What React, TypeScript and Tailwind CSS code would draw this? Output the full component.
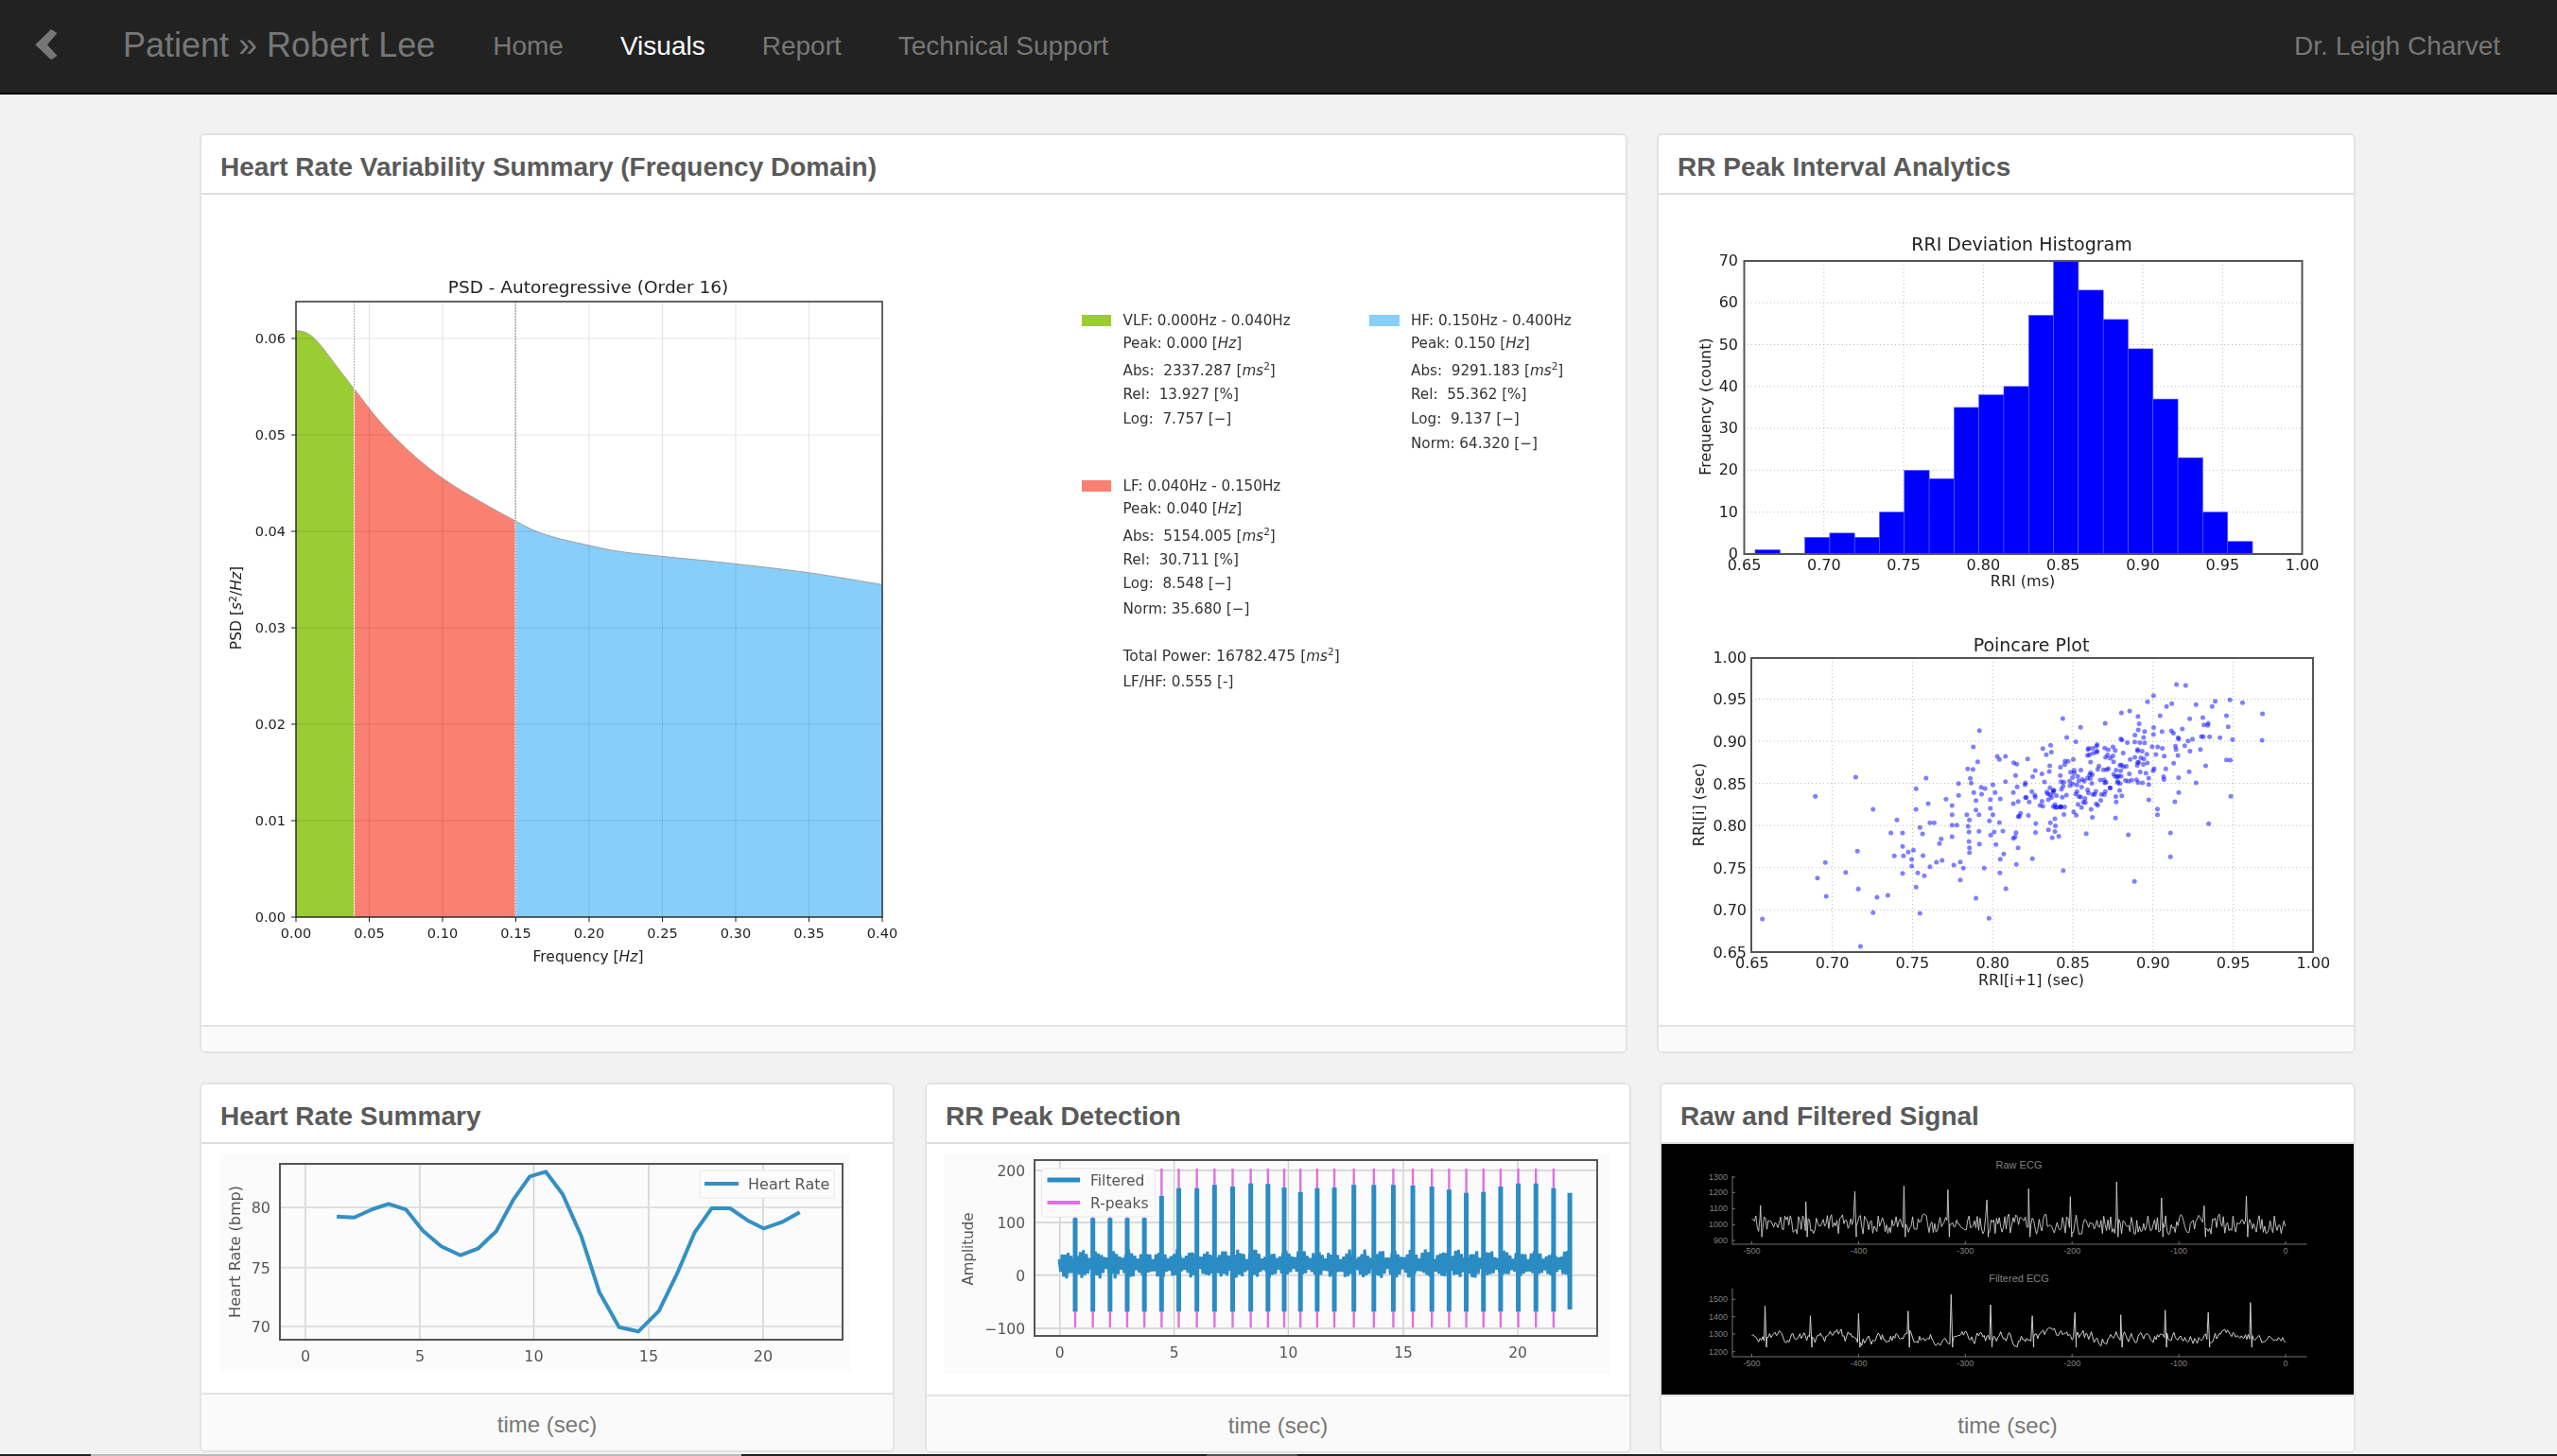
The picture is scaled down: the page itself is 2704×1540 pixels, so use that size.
import React from "react";

// small seeded generator so the noisy traces stay the same on every render
const makeRng = (seed: number) => () => {
    seed = (seed * 1664525 + 1013904223) % 4294967296;
    return seed / 4294967296;
};

const toPoints = (pts: number[][]) => pts.map(([x, y]) => `${x.toFixed(1)},${y.toFixed(1)}`).join(" ");

// catmull-rom resample, the PSD curve has no visible corners
const smoothLine = (pts: number[][]) => {
    const out: number[][] = [];
    for (let i = 0; i < pts.length - 1; i++) {
        const p0 = pts[Math.max(i - 1, 0)];
        const p1 = pts[i];
        const p2 = pts[i + 1];
        const p3 = pts[Math.min(i + 2, pts.length - 1)];
        for (let t = 0; t < 1; t += 0.125) {
            const at = (k: number) =>
                0.5 *
                (2 * p1[k] +
                    (p2[k] - p0[k]) * t +
                    (2 * p0[k] - 5 * p1[k] + 4 * p2[k] - p3[k]) * t * t +
                    (3 * p1[k] - p0[k] - 3 * p2[k] + p3[k]) * t * t * t);
            out.push([at(0), at(1)]);
        }
    }
    out.push(pts[pts.length - 1]);
    return out;
};

const Panel = ({
    title,
    className,
    bodyClass,
    footer,
    children,
}: {
    title: string;
    className: string;
    bodyClass: string;
    footer?: string;
    children: React.ReactNode;
}) => (
    <section className={`flex flex-col border-2 border-[#e3e3e3] rounded-[6px] bg-white overflow-hidden ${className}`}>
        <div className="h-[63px] shrink-0 flex items-center pt-[6px] pl-[20px] border-b-2 border-[#dddddd] text-[28px] font-bold text-[#5a5a5a]">
            {title}
        </div>
        <div className={`shrink-0 ${bodyClass}`}>{children}</div>
        <div className="flex-1 flex items-center justify-center pt-[4px] bg-[#fafafa] border-t-2 border-[#e3e3e3] text-[24px] text-[#777777]">
            {footer}
        </div>
    </section>
);

/* ---------- PSD chart + legend ---------- */

const psdCurve = smoothLine(
    [
        [192, 160], [215, 165], [240, 185], [280, 235], [318, 283], [400, 380], [513, 475],
        [671, 565], [740, 595], [832, 617], [900, 630], [991, 640], [1151, 656], [1311, 675], [1470, 700],
    ].map(([x, y]) => [220 + x / 2.063, 270 + y / 2.01]),
);

const psdX = (f: number) => 313 + f * 1550;
const psdY = (v: number) => 970 - v * 10200;

const curveYAt = (x: number) => {
    const i = psdCurve.findIndex(([px]) => px >= x);
    if (i <= 0) return psdCurve[0][1];
    const [x0, y0] = psdCurve[i - 1];
    const [x1, y1] = psdCurve[i];
    return y0 + ((y1 - y0) * (x - x0)) / (x1 - x0);
};

const fillBetween = (from: number, to: number) => {
    const inside = psdCurve.filter(([x]) => x > from && x < to);
    return toPoints([[from, 970], [from, curveYAt(from)], ...inside, [to, curveYAt(to)], [to, 970]]);
};

const LegendRows = ({ x, rows }: { x: number; rows: [number, React.ReactNode][] }) => (
    <>
        {rows.map(([y, row], i) => (
            <text key={i} x={x} y={y + 5}>
                {row}
            </text>
        ))}
    </>
);

const Sq = () => (
    <>
        <tspan fontStyle="italic">ms</tspan>
        <tspan dy={-6} fontSize={10.5}>
            2
        </tspan>
        <tspan dy={6}>]</tspan>
    </>
);

const Hz = () => (
    <>
        [<tspan fontStyle="italic">Hz</tspan>]
    </>
);

const PsdFigure = () => (
    <svg viewBox="213 206 1506 878" width={1506} height={878} className="block font-['DejaVu_Sans',sans-serif] blur-[0.3px]">
        <polygon points={fillBetween(313, 374.6)} fill="#9acd32" />
        <polygon points={fillBetween(374.6, 545)} fill="#fa8072" />
        <polygon points={fillBetween(545, 933)} fill="#87cefa" />
        <polyline points={toPoints(psdCurve)} fill="none" stroke="#a0a0a0" strokeWidth={1} />
        {[0.05, 0.1, 0.15, 0.2, 0.25, 0.3, 0.35].map((f) => (
            <line key={f} x1={psdX(f)} x2={psdX(f)} y1={319} y2={970} stroke="#000000" strokeOpacity={0.1} />
        ))}
        {[0.01, 0.02, 0.03, 0.04, 0.05, 0.06].map((v) => (
            <line key={v} x1={313} x2={933} y1={psdY(v)} y2={psdY(v)} stroke="#000000" strokeOpacity={0.1} />
        ))}
        <line x1={374.6} x2={374.6} y1={319} y2={410} stroke="#aaaaaa" strokeDasharray="2 1" />
        <line x1={374.6} x2={374.6} y1={410} y2={970} stroke="#ffffff" strokeDasharray="2 1" />
        <line x1={545} x2={545} y1={319} y2={551} stroke="#888888" strokeDasharray="2 1" />
        <line x1={545} x2={545} y1={551} y2={970} stroke="#ffffff" strokeDasharray="2 1" />
        <rect x={313} y={319} width={620} height={651} fill="none" stroke="#222222" strokeWidth={1.4} />

        <g fontSize={14.5} fill="#222222">
            <text x={622} y={309.5} textAnchor="middle" fontSize={18.5}>
                PSD - Autoregressive (Order 16)
            </text>
            {["0.00", "0.01", "0.02", "0.03", "0.04", "0.05", "0.06"].map((t, i) => (
                <g key={t}>
                    <line x1={308} x2={313} y1={psdY(i / 100)} y2={psdY(i / 100)} stroke="#222222" />
                    <text x={302} y={psdY(i / 100) + 5} textAnchor="end">
                        {t}
                    </text>
                </g>
            ))}
            {["0.00", "0.05", "0.10", "0.15", "0.20", "0.25", "0.30", "0.35", "0.40"].map((t, i) => (
                <g key={t}>
                    <line x1={psdX(i * 0.05)} x2={psdX(i * 0.05)} y1={970} y2={975} stroke="#222222" />
                    <text x={psdX(i * 0.05)} y={992} textAnchor="middle">
                        {t}
                    </text>
                </g>
            ))}
            <text x={622} y={1017} textAnchor="middle" fontSize={15.5}>
                Frequency [<tspan fontStyle="italic">Hz</tspan>]
            </text>
            <text transform="translate(255 643) rotate(-90)" textAnchor="middle" fontSize={15.5}>
                PSD [<tspan fontStyle="italic">s</tspan>
                <tspan dy={-5} fontSize={11}>
                    2
                </tspan>
                <tspan dy={5}>/</tspan>
                <tspan fontStyle="italic">Hz</tspan>]
            </text>
        </g>

        <rect x={1144} y={333} width={31} height={12} fill="#9acd32" />
        <rect x={1448} y={333} width={32} height={12} fill="#87cefa" />
        <rect x={1144} y={508} width={31} height={12} fill="#fa8072" />
        <g fontSize={15.2} fill="#333333">
            <LegendRows
                x={1187.5}
                rows={[
                    [339, "VLF: 0.000Hz - 0.040Hz"],
                    [363, <>Peak: 0.000 <Hz /></>],
                    [392, <>Abs:{"\u00A0 "}2337.287 [<Sq /></>],
                    [417, "Rel:\u00A0 13.927 [%]"],
                    [443, "Log:\u00A0 7.757 [−]"],
                    [514, "LF: 0.040Hz - 0.150Hz"],
                    [538, <>Peak: 0.040 <Hz /></>],
                    [567, <>Abs:{"\u00A0 "}5154.005 [<Sq /></>],
                    [592, "Rel:\u00A0 30.711 [%]"],
                    [617, "Log:\u00A0 8.548 [−]"],
                    [644, "Norm: 35.680 [−]"],
                    [694, <><tspan fontSize={15.6}>Total Power: 16782.475 [</tspan><Sq /></>],
                    [721, "LF/HF: 0.555 [-]"],
                ]}
            />
            <LegendRows
                x={1492}
                rows={[
                    [339, "HF: 0.150Hz - 0.400Hz"],
                    [363, <>Peak: 0.150 <Hz /></>],
                    [392, <>Abs:{"\u00A0 "}9291.183 [<Sq /></>],
                    [417, "Rel:\u00A0 55.362 [%]"],
                    [443, "Log:\u00A0 9.137 [−]"],
                    [469, "Norm: 64.320 [−]"],
                ]}
            />
        </g>
    </svg>
);

/* ---------- RR analytics: histogram + poincare ---------- */

const histCounts = [1, 0, 4, 5, 4, 10, 20, 18, 35, 38, 40, 57, 70, 63, 56, 49, 37, 23, 10, 3];

const extraDots = [
    [204, 966], [326, 577], [331, 836], [349, 787], [351, 894], [396, 818], [419, 516], [423, 751], [425, 871], [430, 1053],
    [459, 618], [459, 946], [468, 897], [493, 891], [500, 693], [508, 766], [514, 652], [527, 693], [527, 736], [527, 821],
    [529, 766], [540, 754], [548, 777], [548, 798], [552, 748], [558, 553], [558, 618], [558, 865], [562, 820], [567, 948],
    [567, 676], [573, 696], [574, 765], [577, 829], [581, 519], [586, 600], [590, 661], [590, 800], [600, 661], [605, 786],
    [612, 727], [616, 712], [618, 780], [627, 586], [641, 606], [641, 635], [641, 668], [641, 705], [645, 795], [652, 668],
    [656, 536], [656, 574], [660, 785], [660, 842], [667, 805], [675, 635], [677, 490], [678, 672], [680, 690], [680, 720],
    [681, 740], [681, 755], [681, 652], [683, 520], [685, 535], [689, 491], [690, 420], [691, 565], [696, 590], [696, 620],
    [696, 900], [700, 467], [703, 688], [703, 635], [704, 368], [704, 728], [708, 548], [709, 570], [715, 805], [717, 552],
    [726, 964], [729, 587], [729, 615], [727, 655], [730, 700], [735, 540], [740, 565], [735, 635], [738, 690], [745, 450],
    [750, 460], [742, 730], [750, 660], [752, 585], [751, 820], [752, 776], [760, 760], [764, 450], [764, 530], [765, 870],
    [758, 687], [783, 470], [782, 710], [790, 475], [793, 740], [789, 793], [815, 458], [826, 775], [850, 425], [858, 445],
    [868, 415], [896, 330], [897, 812], [905, 390], [937, 358], [950, 695], [1158, 222], [1179, 225], [1105, 257], [1091, 277],
    [1147, 283], [1135, 292], [1203, 286], [1247, 275], [1281, 271], [1310, 280], [1240, 292], [1273, 321], [1356, 315],
    [1355, 399], [1287, 397], [1283, 577], [1232, 664], [1144, 693], [1144, 769], [1061, 847], [1047, 699], [1114, 617],
    [1114, 635], [1154, 594], [1163, 565], [1203, 534], [1273, 461], [1225, 480], [1282, 462], [1277, 356], [1258, 391],
    [1234, 388], [1221, 350], [1213, 428], [1187, 499], [1050, 306], [1031, 312],
];

const buildDots = () => {
    const rng = makeRng(42);
    const gauss = () => Math.sqrt(-2 * Math.log(rng() + 1e-6)) * Math.cos(2 * Math.PI * rng());
    const dots = [...extraDots];
    for (let i = 0; i < 270; i++) {
        const x = 965 + 135 * gauss();
        const y = 520 - 0.6 * (x - 965) + 68 * gauss();
        if (x > 780 && x < 1240 && y > 300 && y < 730) dots.push([x, y]);
    }
    return dots.map(([x, y]) => [1770 + x / 2.178, 650 + y / 3]);
};
const poincareDots = buildDots();

const Histogram = () => {
    const x = (v: number) => 1844.5 + (v - 0.65) * 1686;
    const y = (c: number) => 586 - c * 4.43;
    return (
        <g fontSize={16} fill="#222222">
            {[0.7, 0.75, 0.8, 0.85, 0.9, 0.95].map((v) => (
                <line key={v} x1={x(v)} x2={x(v)} y1={276} y2={586} stroke="#bbbbbb" strokeDasharray="1 3" />
            ))}
            {[10, 20, 30, 40, 50, 60].map((c) => (
                <line key={c} x1={1844} x2={2435} y1={y(c)} y2={y(c)} stroke="#bbbbbb" strokeDasharray="1 3" />
            ))}
            {histCounts.map((c, i) =>
                c > 0 ? (
                    <rect key={i} x={1856 + i * 26.3} y={y(c)} width={26.3} height={c * 4.43} fill="#0000ff" stroke="#5a5aff" strokeWidth={0.6} />
                ) : null,
            )}
            <rect x={1844.5} y={276} width={590} height={310} fill="none" stroke="#555555" strokeWidth={2} />
            {["0.65", "0.70", "0.75", "0.80", "0.85", "0.90", "0.95", "1.00"].map((t, i) => (
                <text key={t} x={x(0.65 + i * 0.05)} y={603} textAnchor="middle">
                    {t}
                </text>
            ))}
            {[0, 10, 20, 30, 40, 50, 60, 70].map((c) => (
                <text key={c} x={1838} y={y(c) + 5} textAnchor="end">
                    {c}
                </text>
            ))}
            <text x={2138} y={265} textAnchor="middle" fontSize={19}>
                RRI Deviation Histogram
            </text>
            <text x={2139} y={620} textAnchor="middle">
                RRI (ms)
            </text>
            <text transform="translate(1809 430) rotate(-90)" textAnchor="middle">
                Frequency (count)
            </text>
        </g>
    );
};

const Poincare = () => {
    const x = (v: number) => 1852.8 + (v - 0.65) * 1696;
    const y = (v: number) => 1007 - (v - 0.65) * 892;
    const ticks = ["0.65", "0.70", "0.75", "0.80", "0.85", "0.90", "0.95", "1.00"];
    return (
        <g fontSize={16} fill="#222222">
            {ticks.slice(1, 7).map((t) => (
                <g key={t}>
                    <line x1={x(+t)} x2={x(+t)} y1={696} y2={1007} stroke="#bbbbbb" strokeDasharray="1 3" />
                    <line x1={1852} x2={2446} y1={y(+t)} y2={y(+t)} stroke="#bbbbbb" strokeDasharray="1 3" />
                </g>
            ))}
            {poincareDots.map(([cx, cy], i) => (
                <circle key={i} cx={cx} cy={cy} r={2.5} fill="#0000ff" fillOpacity={0.5} />
            ))}
            <rect x={1852} y={696} width={594} height={311} fill="none" stroke="#555555" strokeWidth={2} />
            {ticks.map((t) => (
                <g key={t}>
                    <text x={x(+t)} y={1024} textAnchor="middle">
                        {t}
                    </text>
                    <text x={1847} y={y(+t) + 6} textAnchor="end">
                        {t}
                    </text>
                </g>
            ))}
            <text x={2148} y={689} textAnchor="middle" fontSize={19}>
                Poincare Plot
            </text>
            <text x={2148} y={1042} textAnchor="middle">
                RRI[i+1] (sec)
            </text>
            <text transform="translate(1802 851) rotate(-90)" textAnchor="middle">
                RRI[i] (sec)
            </text>
        </g>
    );
};

const RriFigure = () => (
    <svg viewBox="1754 206 735 878" width={735} height={878} className="block font-['DejaVu_Sans',sans-serif] blur-[0.4px]">
        <Histogram />
        <Poincare />
    </svg>
);

/* ---------- bottom row ---------- */

const heartLine = [
    [322, 470], [360, 473], [400, 447], [435, 430], [473, 448], [510, 515], [550, 565], [592, 593], [630, 572], [670, 517],
    [708, 415], [743, 343], [778, 328], [815, 400], [855, 530], [895, 710], [938, 821], [980, 835], [1025, 770], [1065, 650],
    [1103, 520], [1140, 444], [1180, 444], [1218, 482], [1253, 508], [1293, 488], [1332, 457],
].map(([x, y]) => [200 + x / 2.063, 1130 + y / 3]);

const HeartFigure = () => (
    <svg
        viewBox="233 1220 667 230"
        width={667}
        height={230}
        className="block ml-[20px] mt-[10px] bg-[#fbfbfb] font-['DejaVu_Sans',sans-serif] blur-[0.6px]"
    >
        {[323, 444, 564.5, 686, 807].map((x) => (
            <line key={x} x1={x} x2={x} y1={1231} y2={1417} stroke="#cfcfcf" strokeWidth={1.4} />
        ))}
        {[1277, 1340.7, 1403].map((y) => (
            <line key={y} x1={296} x2={891} y1={y} y2={y} stroke="#e0e0e0" strokeWidth={2} />
        ))}
        <polyline points={toPoints(heartLine)} fill="none" stroke="#348fc4" strokeWidth={4} strokeLinejoin="round" />
        <rect x={296} y={1231} width={595} height={186} fill="none" stroke="#555555" strokeWidth={2} />
        <g fontSize={16} fill="#555555">
            {[
                [323, "0"],
                [444, "5"],
                [564.5, "10"],
                [686, "15"],
                [807, "20"],
            ].map(([x, t]) => (
                <text key={t} x={x} y={1440} textAnchor="middle">
                    {t}
                </text>
            ))}
            {[
                [1277, "80"],
                [1340.7, "75"],
                [1403, "70"],
            ].map(([y, t]) => (
                <text key={t} x={286} y={+y + 6} textAnchor="end">
                    {t}
                </text>
            ))}
            <text transform="translate(254 1324) rotate(-90)" textAnchor="middle">
                Heart Rate (bmp)
            </text>
            <text x={592} y={1462} textAnchor="middle">
                Time (s)
            </text>
            <rect x={740} y={1238} width={142} height={29} rx={3} fill="#fcfcfc" stroke="#e8e8e8" />
            <line x1={745} x2={781} y1={1252} y2={1252} stroke="#348fc4" strokeWidth={4} />
            <text x={791} y={1258}>
                Heart Rate
            </text>
        </g>
    </svg>
);

const peakTops = [
    475, 475, 475, 475, 475, 405, 380, 380, 370, 375, 365, 367, 378, 393, 380, 378, 370, 370, 370, 372, 375, 385, 395, 392, 375, 365, 365, 380,
];
const peakXs = [
    340, 378, 415, 452, 489, 526, 563, 602, 640, 679, 718, 755, 790, 825, 861, 898, 940, 983, 1025, 1067, 1108, 1145, 1182, 1219, 1256, 1294, 1332, 1370,
];
const rrX = (z: number) => 970 + z / 2.036;
const rrY = (z: number) => 1130 + z / 3;

const buildBand = () => {
    const rng = makeRng(7);
    const pts: number[][] = [];
    for (let x = 1120; x < 1662; x += 1.6) {
        const beat = Math.abs(Math.sin((x - 1120) * 0.19));
        pts.push([x, 1337 + (pts.length % 2 ? 1 : -1) * (5 + (5 + rng() * 6) * beat)]);
    }
    return pts;
};
const rrBand = buildBand();

const PeakFigure = () => (
    <svg
        viewBox="998 1220 704 233"
        width={704}
        height={233}
        className="block ml-[18px] mt-[10px] bg-[#fbfbfb] font-['DejaVu_Sans',sans-serif] blur-[0.6px]"
    >
        {[1120.8, 1241.6, 1362.4, 1484, 1605].map((x) => (
            <line key={x} x1={x} x2={x} y1={1227} y2={1413} stroke="#cfcfcf" strokeWidth={1.4} />
        ))}
        {[1238, 1293, 1348.7, 1405].map((y) => (
            <line key={y} x1={1094} x2={1689} y1={y} y2={y} stroke="#d9d9d9" strokeWidth={2} />
        ))}
        {peakXs.map((z) => (
            <line key={z} x1={rrX(z)} x2={rrX(z)} y1={1236} y2={1404} stroke="#e070e0" strokeWidth={2.4} />
        ))}
        <rect x={1101.5} y={1236} width={120} height={51} rx={3} fill="#fbfbfb" stroke="#e8e8e8" />
        <polyline points={toPoints(rrBand)} fill="none" stroke="#2b8cc4" strokeWidth={3} />
        {peakXs.map((z, i) => (
            <line key={z} x1={rrX(z)} x2={rrX(z)} y1={rrY(peakTops[i])} y2={rrY(772)} stroke="#2b8cc4" strokeWidth={5} />
        ))}
        <line x1={rrX(1405)} x2={rrX(1405)} y1={rrY(395)} y2={rrY(765)} stroke="#2b8cc4" strokeWidth={5} />
        <rect x={1094} y={1227} width={595} height={186} fill="none" stroke="#555555" strokeWidth={2} />
        <g fontSize={15.5} fill="#555555">
            {[
                [1120.8, "0"],
                [1241.6, "5"],
                [1362.4, "10"],
                [1484, "15"],
                [1605, "20"],
            ].map(([x, t]) => (
                <text key={t} x={x} y={1436} textAnchor="middle">
                    {t}
                </text>
            ))}
            {[
                [1238, "200"],
                [1293, "100"],
                [1348.7, "0"],
                [1405, "−100"],
            ].map(([y, t]) => (
                <text key={t} x={1084} y={+y + 6} textAnchor="end">
                    {t}
                </text>
            ))}
            <text transform="translate(1029 1321) rotate(-90)" textAnchor="middle" fontSize={15}>
                Amplitude
            </text>
            <line x1={1107.5} x2={1142} y1={1248} y2={1248} stroke="#2b8cc4" strokeWidth={5} />
            <text x={1153} y={1254}>
                Filtered
            </text>
            <line x1={1107.5} x2={1142} y1={1272} y2={1272} stroke="#e070e0" strokeWidth={4} />
            <text x={1153} y={1278}>
                R-peaks
            </text>
        </g>
    </svg>
);

const ecgX = (z: number) => 1740 + z / 2.063;
const ecgY = (z: number) => 1130 + z / 3;

const ecgTrace = (seed: number, base: number, amp: number, smooth: number, dip: number, peaks: number[][]) => {
    const rng = makeRng(seed);
    const out: number[][] = [];
    let prev = base;
    let next = 0;
    for (let x = 232; x <= 1397; x += 3) {
        if (next < peaks.length && x >= peaks[next][0]) {
            out.push([peaks[next][0], peaks[next][1]], [peaks[next][0] + 3, dip]);
            next += 1;
            continue;
        }
        const raw = base + (rng() - 0.5) * 2 * amp;
        prev = prev * smooth + raw * (1 - smooth);
        out.push([x, prev]);
    }
    return out.map(([x, y]) => [ecgX(x), ecgY(y)]);
};

const rawTrace = ecgTrace(11, 495, 34, 0.1, 535, [
    [251, 435], [350, 423], [457, 390], [564, 373], [660, 385], [745, 417], [836, 382], [927, 407], [1028, 360], [1126, 411], [1219, 436], [1311, 405],
]);
const filteredTrace = ecgTrace(23, 855, 48, 0.68, 885, [
    [261, 753], [360, 785], [465, 778], [573, 770], [667, 718], [753, 750], [844, 785], [937, 775], [1037, 782], [1134, 767], [1228, 775], [1320, 743],
]);

const EcgAxes = ({ top, base, ticks }: { top: number; base: number; ticks: [number, string][] }) => (
    <g fill="#808080" fontSize={9}>
        <line x1={1832} x2={1832} y1={top} y2={base} stroke="#777777" />
        <line x1={1832} x2={2439.5} y1={base} y2={base} stroke="#777777" />
        {[
            [1852.5, "-500"],
            [1965.4, "-400"],
            [2078.3, "-300"],
            [2191.2, "-200"],
            [2304.1, "-100"],
            [2417, "0"],
        ].map(([x, t]) => (
            <g key={t}>
                <line x1={x} x2={x} y1={base - 3} y2={base} stroke="#777777" />
                <text x={x} y={base + 10} textAnchor="middle">
                    {t}
                </text>
            </g>
        ))}
        {ticks.map(([y, t]) => (
            <g key={t}>
                <line x1={1832} x2={1835} y1={y} y2={y} stroke="#777777" />
                <text x={1827} y={y + 3} textAnchor="end">
                    {t}
                </text>
            </g>
        ))}
    </g>
);

const EcgFigure = () => (
    <svg viewBox="1757 1210 734 265" width={734} height={265} className="block bg-black font-['Liberation_Sans',sans-serif]">
        <text x={2135} y={1236} textAnchor="middle" fontSize={11} fill="#808080">
            Raw ECG
        </text>
        <EcgAxes
            top={1244}
            base={1316}
            ticks={[
                [1245, "1300"],
                [1261.3, "1200"],
                [1278.3, "1100"],
                [1295.3, "1000"],
                [1312, "900"],
            ]}
        />
        <polyline points={toPoints(rawTrace)} fill="none" stroke="#cfcfcf" strokeWidth={0.9} />
        <text x={2135} y={1356} textAnchor="middle" fontSize={11} fill="#808080">
            Filtered ECG
        </text>
        <EcgAxes
            top={1363}
            base={1435}
            ticks={[
                [1374.3, "1500"],
                [1392.7, "1400"],
                [1411, "1300"],
                [1429.7, "1200"],
            ]}
        />
        <polyline points={toPoints(filteredTrace)} fill="none" stroke="#cfcfcf" strokeWidth={1} />
    </svg>
);

const App = () => {
    return (
        <div className="h-[1540px] flex flex-col overflow-hidden bg-[#f2f2f2] font-['Liberation_Sans',sans-serif]">
            <nav className="h-[100px] shrink-0 flex items-center bg-[#222222] border-b-2 border-[#080808] text-[28px] text-[#777777]">
                <svg viewBox="37 31 24 33" width={24} height={33} className="ml-[37px] mb-[4px] fill-[#777777]">
                    <polygon points="54,31 60.5,35 50,47.3 60.5,59 54,63.3 37.3,47.3" />
                </svg>
                <span className="ml-[69px] mr-[61px] mb-[2px] text-[36px]">Patient » Robert Lee</span>
                <div className="flex gap-[60px] mb-[1px]">
                    <a>Home</a>
                    <a className="text-white">Visuals</a>
                    <a>Report</a>
                    <a>Technical Support</a>
                </div>
                <span className="ml-auto mr-[60px] mb-[1px]">Dr. Leigh Charvet</span>
            </nav>

            <main className="flex-1 pl-[211px] pt-[41px]">
                <div className="flex gap-[31px]">
                    <Panel title="Heart Rate Variability Summary (Frequency Domain)" className="w-[1510px] h-[973px]" bodyClass="h-[878px]">
                        <PsdFigure />
                    </Panel>
                    <Panel title="RR Peak Interval Analytics" className="w-[739px] h-[973px]" bodyClass="h-[878px]">
                        <RriFigure />
                    </Panel>
                </div>
                <div className="flex mt-[31px]">
                    <Panel title="Heart Rate Summary" footer="time (sec)" className="w-[735px] h-[391px] mr-[32px]" bodyClass="h-[263px]">
                        <HeartFigure />
                    </Panel>
                    <Panel title="RR Peak Detection" footer="time (sec)" className="w-[747px] h-[392px] mr-[30px]" bodyClass="h-[265px]">
                        <PeakFigure />
                    </Panel>
                    <Panel title="Raw and Filtered Signal" footer="time (sec)" className="w-[736px] h-[392px]" bodyClass="h-[265px]">
                        <EcgFigure />
                    </Panel>
                </div>
            </main>

            <div className="h-[2px] shrink-0 flex">
                <div className="w-[96px] bg-[#222222]" />
                <div className="w-[688px] bg-[#bbbbbb]" />
                <div className="w-[492px] bg-[#222222]" />
                <div className="w-[96px] bg-[#555555]" />
                <div className="flex-1 bg-[#222222]" />
            </div>
        </div>
    );
};

export default App;
